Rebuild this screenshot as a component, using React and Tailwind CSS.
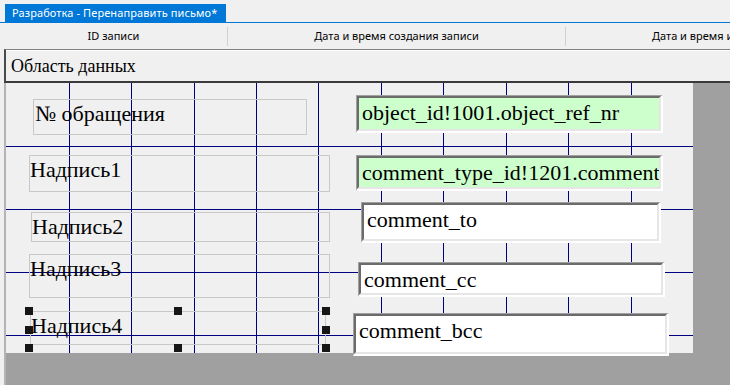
import React from 'react';

const serif = { fontFamily: '"Liberation Serif", "Times New Roman", serif' };

const vLines = [63, 125, 188, 250, 312, 375, 437, 500, 562, 625];
const hLines = [63, 126, 189, 252];

const labels = [
  { text: '№ обращения', x: 27, y: 16, w: 274, h: 36, pl: 1 },
  { text: 'Надпись1', x: 23, y: 72, w: 301, h: 37, pl: 0 },
  { text: 'Надпись2', x: 25, y: 129, w: 299, h: 30, pl: 0 },
  { text: 'Надпись3', x: 23, y: 171, w: 301, h: 44, pl: 0 },
  { text: 'Надпись4', x: 24, y: 228, w: 296, h: 34, pl: 0 },
];

const fields = [
  { text: 'object_id!1001.object_ref_nr', x: 350, y: 12, w: 307, h: 38, green: true },
  { text: 'comment_type_id!1201.comment_', x: 350, y: 72, w: 307, h: 36, green: true },
  { text: 'comment_to', x: 355, y: 119, w: 300, h: 41 },
  { text: 'comment_cc', x: 352, y: 179, w: 307, h: 35 },
  { text: 'comment_bcc', x: 347, y: 230, w: 316, h: 43 },
];

// selection handles around Надпись4
const handles = [
  [19, 224], [168, 224], [316, 224],
  [19, 243], [316, 243],
  [19, 261], [168, 261], [316, 261],
];

function Label({ text, x, y, w, h, pl }) {
  return (
    <div
      className="absolute border border-[#c8c8c8] pt-[1px] text-[22px] leading-[25px] text-black whitespace-nowrap overflow-hidden"
      style={{ left: x, top: y, width: w, height: h, paddingLeft: pl, ...serif }}
    >
      {text}
    </div>
  );
}

function Field({ text, x, y, w, h, green }) {
  return (
    <div
      className="absolute border-t border-l border-[#a0a0a0] border-b-2 border-r-2 border-b-white border-r-white"
      style={{ left: x, top: y, width: w, height: h }}
    >
      <div
        className={`h-full border-t-2 border-l-2 border-[#6b6b6b] border-b-2 border-r-2 border-b-[#e6e6e6] border-r-[#e6e6e6] pt-[2px] pl-[3px] text-[22px] leading-[25px] text-black whitespace-nowrap overflow-hidden ${green ? 'bg-[#ccffcc]' : 'bg-white'}`}
        style={serif}
      >
        {text}
      </div>
    </div>
  );
}

export default function App() {
  return (
    <div
      className="w-[730px] h-[385px] overflow-hidden bg-[#f0f0f0] flex flex-col text-black"
      style={{ fontFamily: '"Noto Sans", "Segoe UI", sans-serif' }}
    >
      {/* document tab */}
      <div className="h-[23px] pt-[4px] pl-[5px] border-b border-[#0078d7] shrink-0">
        <div className="w-[221px] h-[18px] bg-[#0078d7] text-white text-[11px] leading-[18px] pl-[7px] whitespace-nowrap tracking-[0.1px]">
          Разработка - Перенаправить письмо*
        </div>
      </div>

      {/* column header row */}
      <div className="h-[26px] flex items-center text-[11px] shrink-0 whitespace-nowrap">
        <div className="w-[227px] text-center">ID записи</div>
        <div className="w-px h-[19px] bg-[#d0d0d0]" />
        <div className="w-[337px] text-center">Дата и время создания записи</div>
        <div className="w-px h-[19px] bg-[#d0d0d0]" />
        <div className="flex-1 pl-[86px] overflow-hidden">Дата и время и</div>
      </div>

      {/* section header */}
      <div className="ml-[4px] border-l-2 border-l-[#4a4a4a] border-t border-t-[#828282] border-b-2 border-b-[#3a3a3a] shrink-0">
        <div className="h-[31px] border-t border-t-white pl-[5px] pt-[5px] text-[18px] leading-[21px]" style={serif}>
          Область данных
        </div>
      </div>

      {/* design surface */}
      <div className="flex-1 ml-[4px] border-l-2 border-l-[#b4b4b4] bg-[#a0a0a0]">
        <div className="relative w-[687px] h-[270px] bg-[#f0f0f0]">
          {vLines.map((x) => (
            <div key={`v${x}`} className="absolute top-0 h-full w-px bg-[#000080]" style={{ left: x }} />
          ))}
          {hLines.map((y) => (
            <div key={`h${y}`} className="absolute left-0 w-full h-px bg-[#000080]" style={{ top: y }} />
          ))}
          {labels.map((l) => (
            <Label key={l.text} {...l} />
          ))}
          {fields.map((f) => (
            <Field key={f.text} {...f} />
          ))}
          {handles.map(([x, y], i) => (
            <div key={i} className="absolute w-[8px] h-[8px] bg-[#161616]" style={{ left: x, top: y }} />
          ))}
        </div>
      </div>
    </div>
  );
}
